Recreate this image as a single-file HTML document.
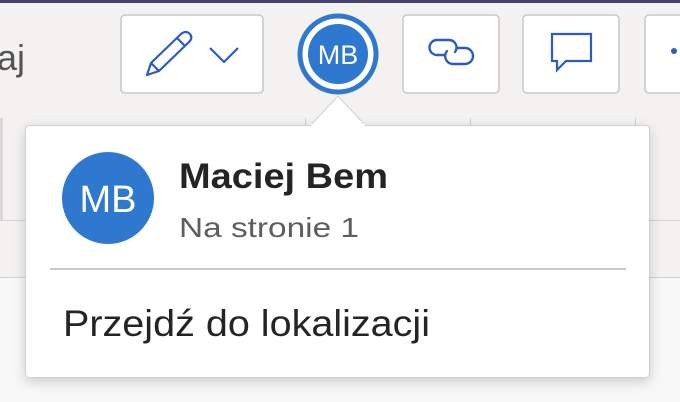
<!DOCTYPE html>
<html><head><style>
html,body{margin:0;padding:0;background:#f3f2f1;}
svg{display:block;font-family:"Liberation Sans",sans-serif;}
</style></head><body>
<svg width="680" height="402" viewBox="0 0 680 402" xmlns="http://www.w3.org/2000/svg">
<defs>
<filter id="sh" x="-10%" y="-10%" width="120%" height="130%">
<feDropShadow dx="0" dy="4" stdDeviation="6" flood-color="#000" flood-opacity="0.18"/>
</filter>
</defs>
<rect width="680" height="402" fill="#f3f2f1"/>
<rect y="277" width="680" height="125" fill="#f8f8f8"/>
<rect width="680" height="3" fill="#45436a"/>
<line x1="0" y1="220.5" x2="680" y2="220.5" stroke="#d4d4d4"/>
<line x1="0" y1="277.5" x2="680" y2="277.5" stroke="#d4d4d4"/>
<line x1="1.5" y1="118" x2="1.5" y2="220" stroke="#cfcfcf" stroke-width="2"/>
<line x1="305.5" y1="118" x2="305.5" y2="128" stroke="#cfcfcf"/>
<line x1="470.5" y1="118" x2="470.5" y2="128" stroke="#cfcfcf"/>
<line x1="635.5" y1="118" x2="635.5" y2="128" stroke="#cfcfcf"/>
<text x="-3" y="70" font-size="36" fill="#555">aj</text>
<!-- pencil button -->
<rect x="121" y="15" width="142" height="78" rx="4" fill="#fff" stroke="#c8c8c8" stroke-width="1.5"/>
<g fill="none" stroke="#2b5cc0" stroke-width="2.2" stroke-linejoin="round">
<path d="M147 75 L151 63 L181 34 Q186 30 190 34 Q193 38 189 42 L159 71 Z"/>
<path d="M151 63 L159 71"/>
<path d="M177 38 L185 46"/>
<path d="M210 48 L224 62 L238 48"/>
</g>
<!-- avatar -->
<circle cx="338" cy="54" r="38" fill="#fff" stroke="#2f78d0" stroke-width="5"/>
<circle cx="338" cy="54" r="30" fill="#2f78d0"/>
<text x="338" y="64" font-size="27" fill="#fff" text-anchor="middle">MB</text>
<!-- link button -->
<rect x="403" y="15" width="96" height="78" rx="4" fill="#fff" stroke="#c8c8c8" stroke-width="1.5"/>
<g fill="none" stroke="#2b5cc0" stroke-width="2.4" stroke-linecap="round">
<path d="M444 55 L437 55 A7.5 7.5 0 0 1 437 40 L449 40 A7.5 7.5 0 0 1 455 52"/>
<path d="M458 48 L465 48 A8 8 0 0 1 465 64 L452 64 A8 8 0 0 1 447 51"/>
</g>
<!-- comment button -->
<rect x="523" y="15" width="96" height="78" rx="4" fill="#fff" stroke="#c8c8c8" stroke-width="1.5"/>
<path d="M552 34 L591 34 L591 61 L566 61 L557 70 L557 61 L552 61 Z" fill="none" stroke="#2b5cc0" stroke-width="2.2" stroke-linejoin="miter"/>
<!-- more button -->
<rect x="645" y="15" width="60" height="78" rx="4" fill="#fff" stroke="#c8c8c8" stroke-width="1.5"/>
<circle cx="674" cy="51" r="3" fill="#2b5cc0"/>
<!-- popup -->
<g filter="url(#sh)">
<rect x="25.5" y="125.5" width="624" height="252" rx="4" fill="#fff" stroke="#d0d0d0"/>
</g>
<path d="M310 126 L338 96 L366 126" fill="#fff" stroke="#d0d0d0"/>
<rect x="311" y="124" width="54" height="4" fill="#fff"/>
<circle cx="108" cy="198" r="46" fill="#2f78d0"/>
<text x="108" y="212" font-size="38" fill="#fff" text-anchor="middle">MB</text>
<text x="179" y="188" font-size="35" font-weight="bold" fill="#252423" textLength="209" lengthAdjust="spacingAndGlyphs">Maciej Bem</text>
<text x="179" y="237" font-size="28" fill="#605e5c" textLength="180" lengthAdjust="spacingAndGlyphs">Na stronie 1</text>
<line x1="50" y1="269" x2="626" y2="269" stroke="#c8c8c8" stroke-width="2"/>
<text x="63" y="336" font-size="37" fill="#252423" textLength="367" lengthAdjust="spacingAndGlyphs">Przejdź do lokalizacji</text>
</svg>
</body></html>
